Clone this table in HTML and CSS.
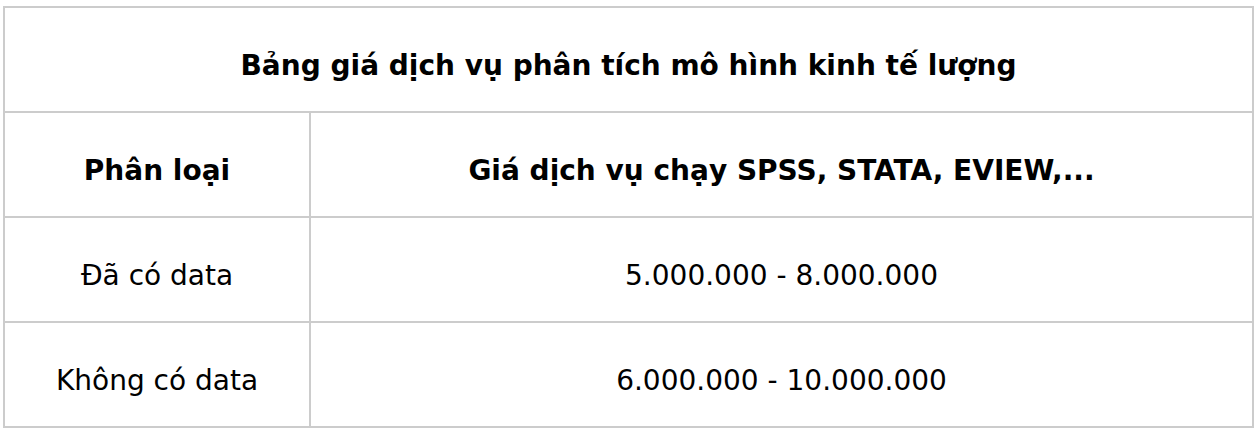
FILE: index.html
```html
<!DOCTYPE html>
<html lang="vi">
<head>
<meta charset="utf-8">
<link rel="stylesheet" href="styles.css">
</head>
<body>
<table class="price">
  <colgroup>
    <col class="col-a">
    <col class="col-b">
  </colgroup>
  <tr>
    <th class="title" colspan="2">Bảng giá dịch vụ phân tích mô hình kinh tế lượng</th>
  </tr>
  <tr>
    <th>Phân loại</th>
    <th>Giá dịch vụ chạy SPSS, STATA, EVIEW,...</th>
  </tr>
  <tr>
    <td>Đã có data</td>
    <td>5.000.000 - 8.000.000</td>
  </tr>
  <tr>
    <td>Không có data</td>
    <td>6.000.000 - 10.000.000</td>
  </tr>
</table>
</body>
</html>
```
FILE: styles.css
```css
html, body {
  margin: 0;
  background: #fff;
}
body {
  padding: 6px 5px 0 3px;
  font-family: "DejaVu Sans", Verdana, sans-serif;
  color: #000;
}
.price {
  width: 1251px;
  border-collapse: collapse;
  table-layout: fixed;
}
.col-a {
  width: 306px;
}
.price th, .price td {
  border: 2px solid #cccccc;
  height: 91px;
  padding: 12px 0 0;
  text-align: center;
  vertical-align: middle;
  font-size: 28px;
  line-height: 1.2;
}
.price th {
  font-weight: bold;
}
.price td {
  font-weight: normal;
}
```
